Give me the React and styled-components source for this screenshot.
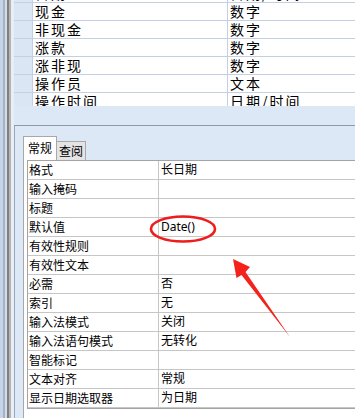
import styled, { createGlobalStyle } from 'styled-components';

const GlobalStyle = createGlobalStyle`
  html, body {
    margin: 0;
    padding: 0;
    width: 355px;
    height: 418px;
    overflow: hidden;
    background: #fff;
  }
  * { box-sizing: border-box; }
`;

const fields = [
    ['日期', '日期/时间'],
    ['现金', '数字'],
    ['非现金', '数字'],
    ['涨款', '数字'],
    ['涨非现', '数字'],
    ['操作员', '文本'],
    ['操作时间', '日期/时间'],
];

const props = [
    ['格式', '长日期'],
    ['输入掩码', ''],
    ['标题', ''],
    ['默认值', 'Date()'],
    ['有效性规则', ''],
    ['有效性文本', ''],
    ['必需', '否'],
    ['索引', '无'],
    ['输入法模式', '关闭'],
    ['输入法语句模式', '无转化'],
    ['智能标记', ''],
    ['文本对齐', '常规'],
    ['显示日期选取器', '为日期'],
];

const Page = styled.div`
  position: relative;
  display: flex;
  width: 355px;
  height: 418px;
  overflow: hidden;
`;

const LeftStrip = styled.div`
  width: 14px;
  flex: none;
  background: linear-gradient(to right,
    #c6d4e8 0 3px, #a3b3ca 3px 5px, #d3dbe6 5px 7px,
    #7f7f7f 7px 9px, #b4b4b4 9px 11px, #e9eef6 11px 14px);
`;

const Main = styled.div`
  flex: 1;
  display: flex;
  flex-direction: column;
  min-width: 0;
`;

const TopGrid = styled.div`
  height: 106px;
  overflow: hidden;
  background: #fff;
`;

const FieldRow = styled.div`
  display: flex;
  height: 18px;
  border-bottom: 1px solid #c3cfe2;
  margin-top: ${p => (p.$first ? '-15px' : '0')};
  font-family: "Noto Sans CJK SC", "Noto Sans", sans-serif;
  font-size: 14px;
  letter-spacing: 2px;
  line-height: 17px;
  color: #000;
`;

const Selector = styled.div`
  width: 19px;
  flex: none;
  background: #dbe6f5;
  border-right: 1px solid #c3cfe2;
`;

const FieldName = styled.div`
  width: 195px;
  flex: none;
  padding-left: 2px;
  border-right: 1px solid #c3cfe2;
  white-space: nowrap;
`;

const FieldType = styled.div`
  flex: 1;
  padding-left: 2px;
  white-space: nowrap;
`;

const TopEmpty = styled.div`
  height: 20px;
  background: #dde8f7;
  border-bottom: 1px solid #8b9aae;
`;

const BottomPanel = styled.div`
  flex: 1;
  display: flex;
  flex-direction: column;
  background: #dde8f7;
  padding: 10px 0 0 8px;
  border-left: 1px solid #9aa8bc;
`;

const TabStrip = styled.div`
  display: flex;
  align-items: flex-end;
  height: 24px;
`;

const Tab = styled.div`
  height: ${p => (p.$active ? '24px' : '19px')};
  padding: ${p => (p.$active ? '3px 4px 0 4px' : '1px 2px 0 2px')};
  background: ${p => (p.$active ? '#fff' : '#e4e4e4')};
  border: 1px solid #a8a8a8;
  border-bottom: none;
  border-left: ${p => (p.$active ? '1px solid #a8a8a8' : 'none')};
  font-family: "Noto Sans CJK SC", "Noto Sans", sans-serif;
  font-size: 12px;
  line-height: 15px;
  color: #000;
`;

const TabPage = styled.div`
  flex: 1;
  background: #fff;
  border-left: 1px solid #a8a8a8;
  padding-left: 3px;
`;

const PropGrid = styled.div`
  border: 1px solid #a4a4a4;
  border-right: none;
  font-family: "Noto Sans CJK SC", "Noto Sans", sans-serif;
  font-size: 12px;
  color: #000;
`;

const PropRow = styled.div`
  display: flex;
  height: 19px;
  border-bottom: 1px solid #c6c6c6;
  line-height: 18px;
`;

const PropName = styled.div`
  width: 131px;
  flex: none;
  padding-left: 1px;
  border-right: 1px solid #c6c6c6;
  white-space: nowrap;
`;

const PropValue = styled.div`
  flex: 1;
  padding-left: 2px;
  white-space: nowrap;
  font-family: "Noto Sans", "Noto Sans CJK SC", sans-serif;
`;

const Annotation = styled.svg`
  position: absolute;
  left: 0;
  top: 0;
  pointer-events: none;
`;

export default function App() {
    return (
        <>
            <GlobalStyle />
            <Page>
                <LeftStrip />
                <Main>
                    <TopGrid>
                        {fields.map(([name, type], i) => (
                            <FieldRow key={name} $first={i === 0}>
                                <Selector />
                                <FieldName>{name}</FieldName>
                                <FieldType>{type}</FieldType>
                            </FieldRow>
                        ))}
                    </TopGrid>
                    <TopEmpty />
                    <BottomPanel>
                        <TabStrip>
                            <Tab $active>常规</Tab>
                            <Tab>查阅</Tab>
                        </TabStrip>
                        <TabPage>
                            <PropGrid>
                                {props.map(([name, value]) => (
                                    <PropRow key={name}>
                                        <PropName>{name}</PropName>
                                        <PropValue>{value}</PropValue>
                                    </PropRow>
                                ))}
                            </PropGrid>
                        </TabPage>
                    </BottomPanel>
                </Main>

                {/* red markup drawn over the screenshot */}
                <Annotation width="355" height="418" viewBox="0 0 355 418">
                    <ellipse cx="183" cy="229" rx="32" ry="12.5"
                             fill="none" stroke="#ee1c1c" strokeWidth="2.6" />
                    <polygon
                        points="233,259 250,267 245.5,272 290,337 241.5,275 236.5,278"
                        fill="#f5211b" />
                </Annotation>
            </Page>
        </>
    );
}
